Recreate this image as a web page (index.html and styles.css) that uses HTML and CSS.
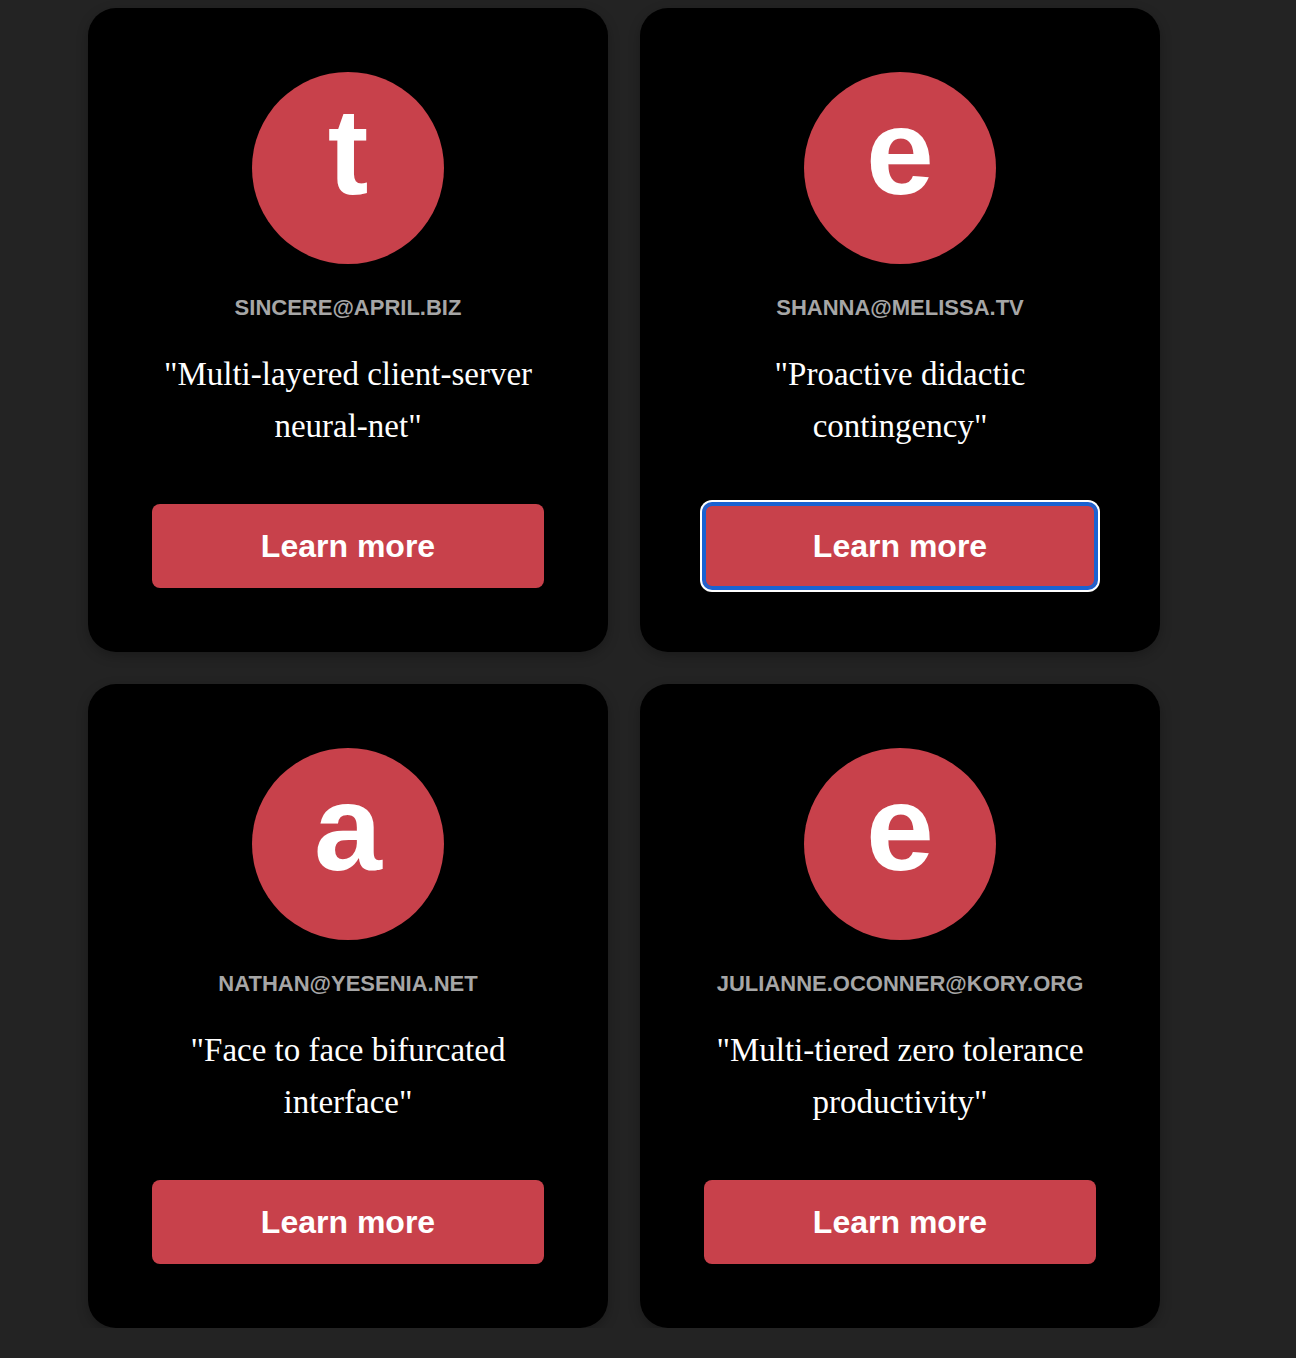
FILE: index.html
```html
<!DOCTYPE html>
<html>
<head>
<meta charset="utf-8">
<link rel="stylesheet" href="styles.css">
</head>
<body>
<div class="grid">
  <div class="card">
    <div class="avatar">t</div>
    <div class="email">SINCERE@APRIL.BIZ</div>
    <p class="quote">"Multi-layered client-server neural-net"</p>
    <button class="btn">Learn more</button>
  </div>
  <div class="card">
    <div class="avatar">e</div>
    <div class="email">SHANNA@MELISSA.TV</div>
    <p class="quote">"Proactive didactic contingency"</p>
    <button class="btn focused">Learn more</button>
  </div>
  <div class="card">
    <div class="avatar">a</div>
    <div class="email">NATHAN@YESENIA.NET</div>
    <p class="quote">"Face to face bifurcated interface"</p>
    <button class="btn">Learn more</button>
  </div>
  <div class="card">
    <div class="avatar">e</div>
    <div class="email">JULIANNE.OCONNER@KORY.ORG</div>
    <p class="quote">"Multi-tiered zero tolerance productivity"</p>
    <button class="btn">Learn more</button>
  </div>
</div>
</body>
</html>
```
FILE: styles.css
```css
html, body {
  margin: 0;
  background: #232323;
}
body {
  padding: 8px 0 0 88px;
  font-family: "Liberation Sans", Arial, sans-serif;
}
.grid {
  display: grid;
  grid-template-columns: 520px 520px;
  gap: 32px;
}
.card {
  background: #000;
  border-radius: 28px;
  padding: 64px;
  display: flex;
  flex-direction: column;
  align-items: center;
  box-shadow: 0 4px 12px rgba(0,0,0,0.25);
}
.avatar {
  width: 192px;
  height: 192px;
  border-radius: 50%;
  background: #c8414b;
  color: #fff;
  font-weight: 700;
  font-size: 122px;
  line-height: 160px;
  text-align: center;
}
.email {
  margin-top: 32px;
  font-size: 22px;
  line-height: 24px;
  font-weight: 700;
  color: #a6a6a6;
}
.quote {
  margin: 28px 0 0;
  font-family: "Liberation Serif", "Times New Roman", serif;
  font-size: 33px;
  line-height: 52px;
  color: #fff;
  text-align: center;
  width: 100%;
}
.btn {
  margin-top: 52px;
  width: 392px;
  height: 84px;
  border: 0;
  border-radius: 8px;
  background: #c8414b;
  color: #fff;
  font-family: "Liberation Sans", Arial, sans-serif;
  font-weight: 700;
  font-size: 32px;
  padding: 0;
}
.btn.focused {
  box-shadow: inset 0 0 0 2px #1a62d2, 0 0 0 2px #1a62d2, 0 0 0 4px #fff;
}
```
